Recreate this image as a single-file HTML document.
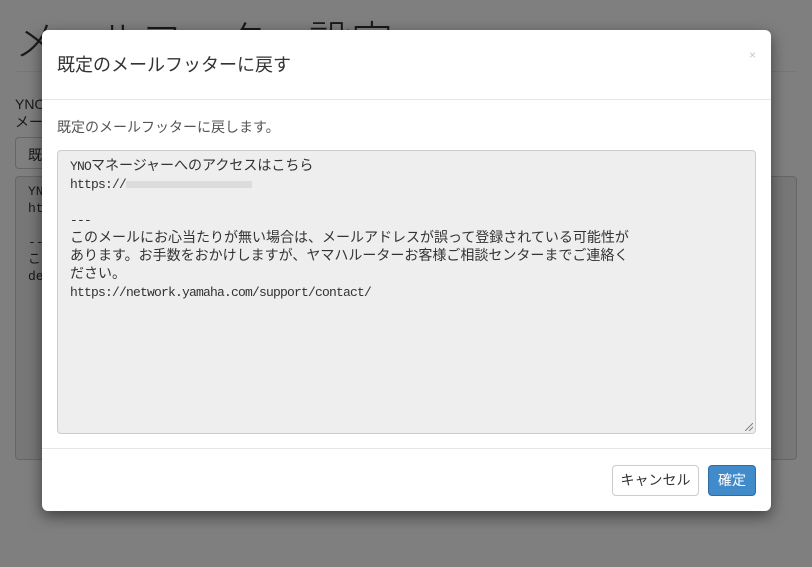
<!DOCTYPE html>
<html><head><meta charset="utf-8">
<style>
html,body{margin:0;padding:0;width:812px;height:567px;overflow:hidden;background:#fff;font-family:"Liberation Sans","Noto Sans CJK JP",sans-serif;color:#333;}
.bg{position:absolute;left:0;top:0;width:812px;height:567px;}
.t{position:absolute;left:15px;top:12px;font-size:42px;font-weight:300;color:#333;line-height:60px;}
.hr{position:absolute;left:15px;right:15px;top:71px;border-top:1px solid #eee;}
.l1{position:absolute;left:15px;top:94px;font-size:14px;}
.l2{position:absolute;left:15px;top:112px;font-size:14px;}
.b{position:absolute;left:15px;top:137px;width:120px;height:32px;border:1px solid #ccc;border-radius:4px;font-size:14px;box-sizing:border-box;padding:7px 12px;}
.ta{position:absolute;left:15px;top:176px;width:782px;height:284px;border:1px solid #ccc;border-radius:4px;background:#eee;box-sizing:border-box;font-family:"Liberation Mono","Noto Sans CJK JP",monospace;font-size:13px;padding:6px 12px;line-height:17px;}
.ov{position:absolute;left:0;top:0;width:812px;height:567px;background:rgba(0,0,0,.5);}
.m{position:absolute;left:42px;top:30px;width:729px;height:481px;background:#fff;border-radius:6px;box-shadow:0 5px 15px rgba(0,0,0,.5);}
.mh{height:69px;border-bottom:1px solid #e5e5e5;position:relative;}
.mh h4{margin:0;position:absolute;left:15px;top:21px;font-size:18px;font-weight:normal;color:#333;}
.x{position:absolute;right:15px;top:18px;font-size:12px;color:#c8c8c8;}
.p{position:absolute;left:15px;top:87px;font-size:14px;color:#555;}
.mt{position:absolute;left:15px;top:120px;width:699px;height:284px;box-sizing:border-box;border:1px solid #ccc;border-radius:4px;background:#eee;font-family:"Noto Sans CJK JP",monospace;font-size:14px;color:#333;padding:5px 12px;}
.mt div{height:18px;line-height:18px;white-space:nowrap;overflow:visible;}
.a{font-family:"Liberation Mono",monospace;font-size:13px;letter-spacing:-0.8px;}
.mf{position:absolute;left:0;right:0;top:418px;border-top:1px solid #e5e5e5;}
.bc{position:absolute;left:570px;top:435px;width:87px;height:31px;box-sizing:border-box;border:1px solid #ccc;border-radius:4px;font-size:14px;text-align:center;line-height:29px;color:#333;background:#fff;}
.bo{position:absolute;left:666px;top:435px;width:48px;height:31px;box-sizing:border-box;border:1px solid #2e6da4;border-radius:4px;font-size:14px;text-align:center;line-height:29px;color:#fff;background:#428bca;}
.blur{display:inline-block;width:126px;height:7px;background:#dcdcdc;vertical-align:0px;}
.mt .grip{position:absolute;right:2px;bottom:2px;width:8px;height:8px;background:linear-gradient(135deg,transparent 45%,#888 46%,#888 54%,transparent 55%,transparent 70%,#888 71%,#888 79%,transparent 80%);}
</style></head><body>
<div class="bg">
<div class="t">メールフッター設定</div>
<div class="hr"></div>
<div class="l1">YNOマネージャーからのメール</div>
<div class="l2">メールフッター</div>
<div class="b">既定に戻す</div>
<div class="ta">YNOマネージャーへのアクセスはこちら<br>https://<br><br>---<br>このメールにお心当たりが無い場合は<br>deleted</div>
</div>
<div class="ov"></div>
<div class="m">
<div class="mh"><h4>既定のメールフッターに戻す</h4><span class="x">×</span></div>
<div class="p">既定のメールフッターに戻します。</div>
<div class="mt">
<div><span class="a">YNO</span>マネージャーへのアクセスはこちら</div>
<div><span class="a">https://</span><span class="blur"></span></div>
<div></div>
<div><span class="a">---</span></div>
<div>このメールにお心当たりが無い場合は、メールアドレスが誤って登録されている可能性が</div>
<div>あります。お手数をおかけしますが、ヤマハルーターお客様ご相談センターまでご連絡く</div>
<div>ださい。</div>
<div><span class="a">https://network.yamaha.com/support/contact/</span></div>
<div class="grip"></div></div>
<div class="mf"></div>
<div class="bc">キャンセル</div>
<div class="bo">確定</div>
</div>
</body></html>
